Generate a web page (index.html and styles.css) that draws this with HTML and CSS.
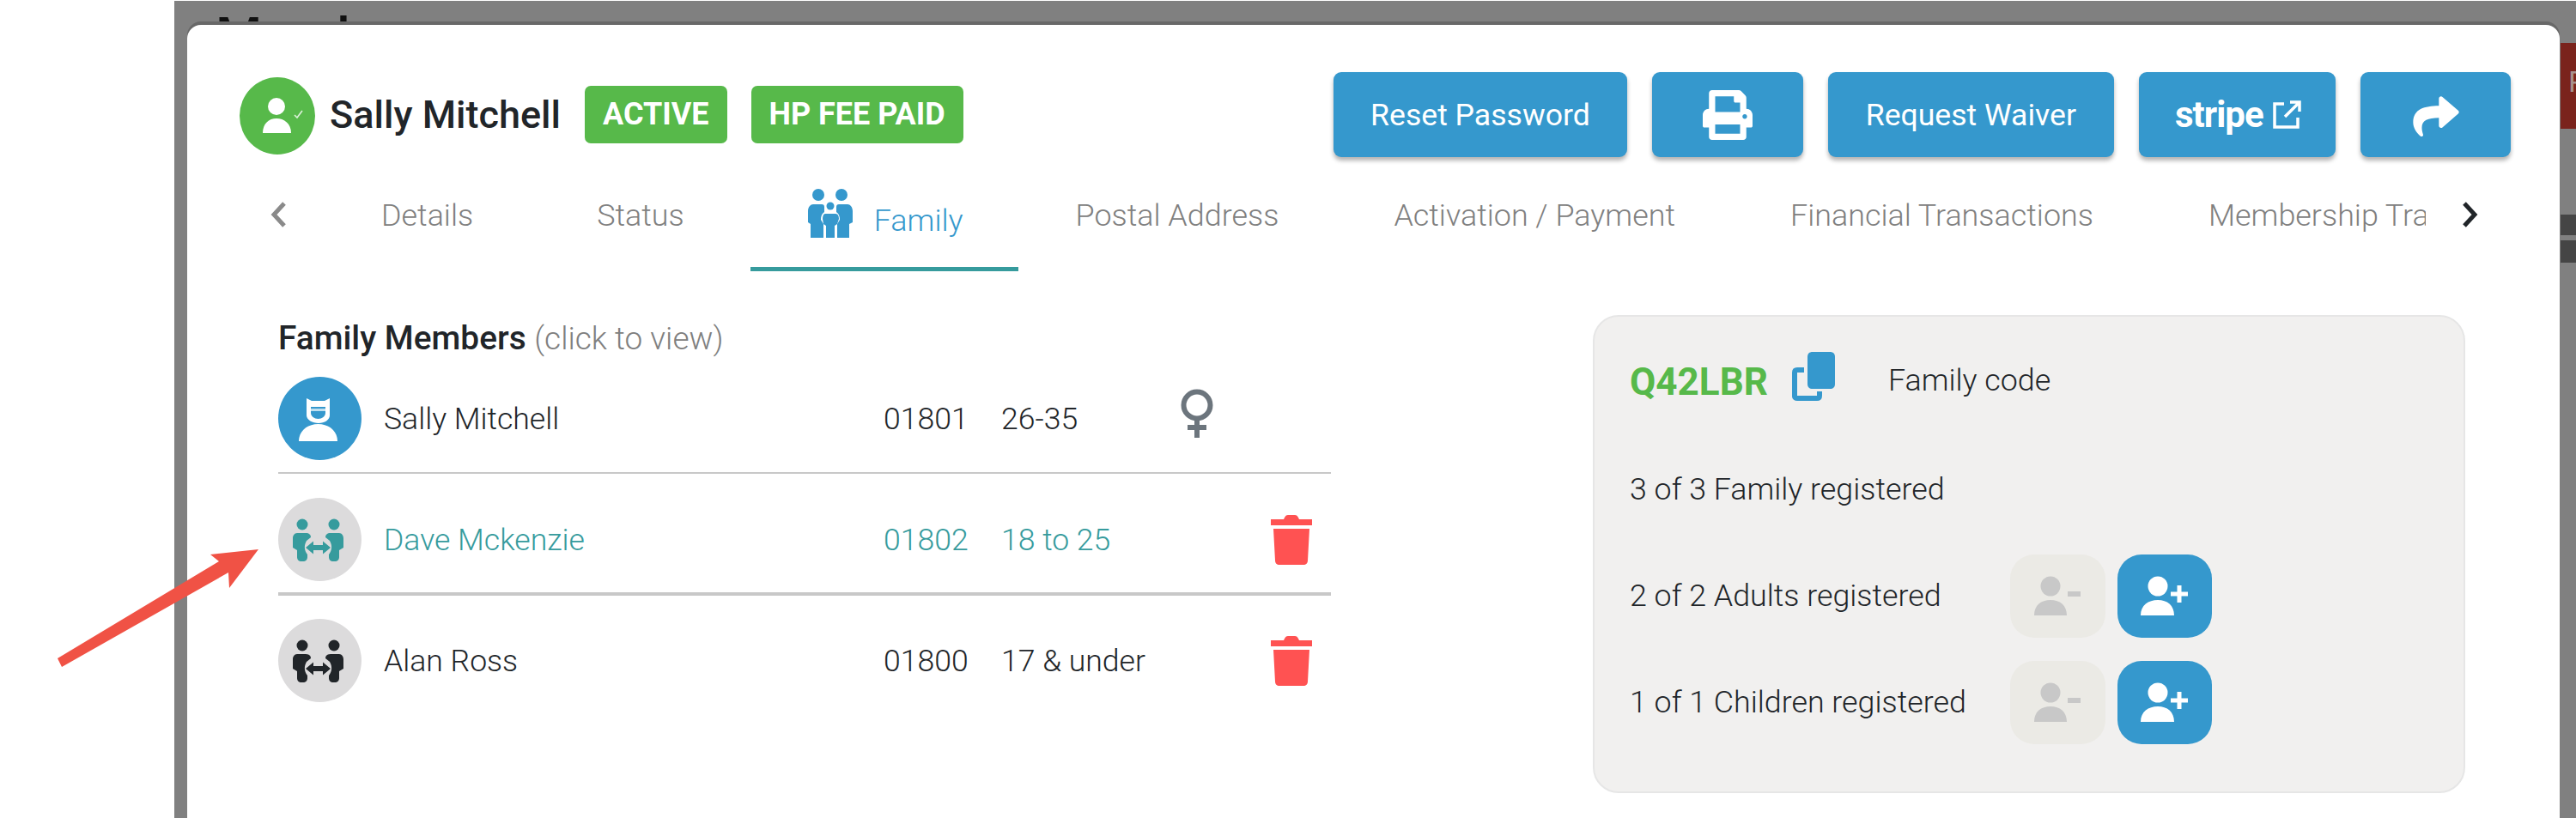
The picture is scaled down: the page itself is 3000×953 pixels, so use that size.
FILE: index.html
```html
<!DOCTYPE html>
<html lang="en">
<head>
    <meta charset="UTF-8">
    <meta name="viewport" content="width=device-width, initial-scale=1.0">
    <title>Members - Sally Mitchell</title>
    <link rel="stylesheet" href="styles.css">
</head>
<body>
    <svg class="defs" width="0" height="0" aria-hidden="true">
        <symbol id="couple" viewBox="0 0 97 97">
            <circle cx="28" cy="31" r="6.5"/>
            <circle cx="65" cy="31" r="6.5"/>
            <path id="half" d="M22 41h10c4 0 6 2 6 5l-5 4c-3 5-3 11 1 16v3c0 3-2 5-5 5h-2c-3 0-5-2-5-5V61l-5-3V47c0-3 2-6 5-6z"/>
            <use href="#half" transform="matrix(-1 0 0 1 93 0)"/>
            <path d="M32 58l9-7.500V55h11v-4.500l9 7.500-9 7.500V61H41v4.500z"/>
        </symbol>
        <symbol id="trash" viewBox="0 0 48 58">
            <path d="M16 3c1-2 2-3 4-3h8c2 0 3 1 4 3l1 2h15v7H0V5h15zM3 16h42l-2 37c0 3-2 5-5 5H10c-3 0-5-2-5-5z"/>
        </symbol>
    </svg>

    <div class="stage">
        <div class="outside"></div>

        <div class="backdrop">
            <div class="page-title">Members</div>
            <div class="page-flag">R</div>
            <div class="page-band one"></div>
            <div class="page-band two"></div>

            <div class="modal">
                <div class="modal-head">
                    <div class="member-title">
                        <div class="status-avatar">
                            <svg width="88" height="90" viewBox="0 0 88 90" fill="#fff">
                                <ellipse cx="43" cy="34" rx="10" ry="10"/>
                                <path d="M27 65c0-11 7-17 16-17s17 6 17 17z"/>
                                <path d="M64 44l3 3 6-8" fill="none" stroke="#fff" stroke-width="1.6" opacity=".8"/>
                            </svg>
                        </div>
                        <span class="member-name">Sally Mitchell</span>
                        <span class="pill">ACTIVE</span>
                        <span class="pill">HP FEE PAID</span>
                    </div>
                    <div class="actions">
                        <button class="action reset">Reset Password</button>
                        <button class="action icon-only print">
                            <svg width="58" height="58" viewBox="0 0 512 512" fill="#fff"><path d="M448 192V77.25c0-8.49-3.37-16.62-9.37-22.63L393.37 9.37c-6-6-14.14-9.37-22.63-9.37H96C78.33 0 64 14.33 64 32v160c-35.35 0-64 28.65-64 64v112c0 8.84 7.16 16 16 16h48v96c0 17.67 14.33 32 32 32h320c17.67 0 32-14.33 32-32v-96h48c8.84 0 16-7.16 16-16V256c0-35.35-28.65-64-64-64zm-64 256H128v-96h256v96zm0-224H128V64h192v48c0 8.84 7.16 16 16 16h48v96zm48 72c-13.25 0-24-10.75-24-24 0-13.26 10.75-24 24-24s24 10.74 24 24c0 13.25-10.75 24-24 24z"/></svg>
                        </button>
                        <button class="action">Request Waiver</button>
                        <button class="action stripe">
                            <span class="stripe-word">stripe</span>
                            <svg width="33" height="33" viewBox="0 0 33 33" fill="none" stroke="#fff" stroke-width="3.5"><path d="M13 4H2v27h27V20"/><path d="M14 19L30 3M20 2h11v11"/></svg>
                        </button>
                        <button class="action icon-only share">
                            <svg width="56" height="50" viewBox="0 0 512 480" fill="#fff"><path d="M503.691 189.836L327.687 37.851C312.281 24.546 288 35.347 288 56.015v80.053C127.371 137.907 0 170.1 0 322.326c0 61.441 39.581 122.309 83.333 154.132 13.653 9.931 33.111-2.533 28.077-18.631C66.066 312.814 132.917 274.316 288 272.085V360c0 20.7 24.3 31.453 39.687 18.164l176.004-152c11.071-9.562 11.086-26.753 0-36.328z"/></svg>
                        </button>
                    </div>
                </div>

                <div class="tab-row">
                    <svg class="chevron" width="19" height="30" viewBox="0 0 19 30" fill="none" stroke="#8a8a8a" stroke-width="5"><path d="M16 2L4 15l12 13"/></svg>
                    <div class="tabs">
                        <a class="tab wide">Details</a>
                        <a class="tab wide">Status</a>
                        <a class="tab active">
                            <svg width="52" height="58" viewBox="0 0 52 58" fill="#3598cd">
                                <circle cx="12" cy="8" r="7"/>
                                <circle cx="39" cy="8" r="7"/>
                                <circle cx="26" cy="21" r="4.5"/>
                                <path d="M6 19h10c2 0 3 1 3 3v6c-3 2-4 5-4 9l3 5v16H3V42l-3-2V27c0-5 3-8 6-8z"/>
                                <path d="M46 19H36c-2 0-3 1-3 3v6c3 2 4 5 4 9l-3 5v16h14V42l4-2V27c0-5-3-8-6-8z"/>
                                <path d="M20 30h12c3 0 4 3 4 6l-2 6-3 2v14H21V44l-3-2-1-6c0-3 1-6 3-6z"/>
                            </svg>
                            <span>Family</span>
                        </a>
                        <a class="tab">Postal Address</a>
                        <a class="tab">Activation / Payment</a>
                        <a class="tab">Financial Transactions</a>
                        <a class="tab">Membership Transactions</a>
                    </div>
                    <svg class="chevron next" width="19" height="30" viewBox="0 0 19 30" fill="none" stroke="#212529" stroke-width="5"><path d="M3 2l12 13L3 28"/></svg>
                </div>

                <div class="tab-body">
                    <div class="family-list">
                        <h3 class="list-heading">Family Members <small>(click to view)</small></h3>

                        <div class="member-row first">
                            <div class="avatar primary">
                                <svg width="97" height="97" viewBox="0 0 97 97">
                                    <path d="M33 25l6 3h15l6-3v20c0 5-6 9-13 9s-14-4-14-9z" fill="#fff"/>
                                    <path d="M38 35h17v7c0 4-4 7-8.500 7S38 46 38 42z" fill="#3598cd"/>
                                    <path d="M38 37h17v3H38z" fill="#bfe0f0"/>
                                    <path d="M24 75c0-12 10-20 22.500-20S69 63 69 75z" fill="#fff"/>
                                </svg>
                            </div>
                            <span>Sally Mitchell</span>
                            <span>01801</span>
                            <span>26-35</span>
                            <svg class="gender" width="38" height="57" viewBox="0 0 38 57" fill="none" stroke="#6c757d" stroke-width="6"><circle cx="19" cy="19" r="15.500"/><path d="M19 35v22M8 45h22"/></svg>
                        </div>

                        <div class="member-row selected thick">
                            <div class="avatar"><svg width="97" height="97"><use href="#couple"/></svg></div>
                            <span>Dave Mckenzie</span>
                            <span>01802</span>
                            <span>18 to 25</span>
                            <span></span>
                            <svg class="trash" width="48" height="58"><use href="#trash"/></svg>
                        </div>

                        <div class="member-row last">
                            <div class="avatar"><svg width="97" height="97"><use href="#couple"/></svg></div>
                            <span>Alan Ross</span>
                            <span>01800</span>
                            <span>17 &amp; under</span>
                            <span></span>
                            <svg class="trash" width="48" height="58"><use href="#trash"/></svg>
                        </div>
                    </div>

                    <div class="family-card">
                        <div class="code-row">
                            <span class="family-code">Q42LBR</span>
                            <svg class="copy" width="50" height="57" viewBox="0 0 50 57">
                                <path d="M14 21H6c-2 0-3 1-3 3v28c0 1 1 2 3 2h23c2 0 3-1 3-3v-5" fill="none" stroke="#3598cd" stroke-width="6"/>
                                <path d="M24 0h20c4 0 6 2 6 6v31c0 4-2 6-6 6H24c-4 0-6-2-6-6V6c0-4 2-6 6-6z" fill="#3598cd"/>
                            </svg>
                            <span class="code-label">Family code</span>
                        </div>
                        <div class="count-row"><span class="count-label">3 of 3 Family registered</span></div>
                        <div class="count-row">
                            <span class="count-label">2 of 2 Adults registered</span>
                            <button class="count-btn off">
                                <svg width="111" height="97" viewBox="0 0 111 97" fill="#c8c8c8"><circle cx="47" cy="37" r="11.500"/><path d="M28 71c0-12 8-18 19-18s19 6 19 18zM67 43h15v6H67z"/></svg>
                            </button>
                            <button class="count-btn">
                                <svg width="110" height="97" viewBox="0 0 110 97" fill="#fff"><circle cx="47" cy="37" r="11.500"/><path d="M27 71c0-12 9-18 20-18s19 6 19 18zM62 43.500h7.500V36h5v7.500H82v5h-7.500V56h-5v-7.500H62z"/></svg>
                            </button>
                        </div>
                        <div class="count-row">
                            <span class="count-label">1 of 1 Children registered</span>
                            <button class="count-btn off">
                                <svg width="111" height="97" viewBox="0 0 111 97" fill="#c8c8c8"><circle cx="47" cy="37" r="11.500"/><path d="M28 71c0-12 8-18 19-18s19 6 19 18zM67 43h15v6H67z"/></svg>
                            </button>
                            <button class="count-btn">
                                <svg width="110" height="97" viewBox="0 0 110 97" fill="#fff"><circle cx="47" cy="37" r="11.500"/><path d="M27 71c0-12 9-18 20-18s19 6 19 18zM62 43.500h7.500V36h5v7.500H82v5h-7.500V56h-5v-7.500H62z"/></svg>
                            </button>
                        </div>
                    </div>
                </div>
            </div>
        </div>

        <!-- annotation drawn over the screenshot -->
        <svg class="callout" width="320" height="160" viewBox="0 0 320 160" fill="#f05245"><path d="M67 127L255 14 245 6 301 0 267 45 266 27 72 137z"/></svg>
    </div>
</body>
</html>
```

FILE: styles.css
```css
* {
    box-sizing: border-box;
}

html, body {
    margin: 0;
    height: 100%;
}

body {
    font-family: Roboto, "Open Sans", sans-serif;
    color: #212529;
    background: #fff;
    overflow: hidden;
}

.defs {
    position: absolute;
}

.stage {
    position: relative;
    display: flex;
    height: 953px;
    overflow: hidden;
}

.outside {
    width: 203px;
    flex: none;
}

.backdrop {
    position: relative;
    flex: 1;
    margin-top: 1px;
    background: #808080;
    padding: 28px 0 0 15px;
}

.page-title {
    position: absolute;
    left: 48px;
    top: 5px;
    font-size: 62px;
    font-weight: 500;
    line-height: 1.2;
    color: #101010;
}

.page-flag {
    position: absolute;
    right: 0;
    top: 49px;
    width: 18px;
    height: 100px;
    padding-left: 9px;
    background: #7a231c;
    color: #a8918e;
    font-size: 34px;
    line-height: 90px;
    overflow: hidden;
}

.page-band {
    position: absolute;
    right: 0;
    width: 18px;
    background: #454545;
}

.page-band.one { top: 249px; height: 24px; }
.page-band.two { top: 279px; height: 26px; }

.modal {
    position: relative;
    width: 2763px;
    height: 940px;
    background: #fff;
    border-radius: 16px 16px 0 0;
    box-shadow: 0 -4px 0 #686868;
}

.modal-head {
    display: flex;
    justify-content: space-between;
    align-items: center;
    padding: 55px 57px 0 61px;
}

.member-title {
    display: flex;
    align-items: center;
}

.status-avatar {
    display: flex;
    width: 88px;
    height: 90px;
    border-radius: 50%;
    background: #57b94a;
    margin-top: 3px;
}

.member-name {
    margin: 0 28px 0 17px;
    font-size: 45px;
    font-weight: 500;
}

.pill {
    height: 67px;
    margin-right: 28px;
    padding: 0 21px;
    background: #57b94a;
    border-radius: 7px;
    color: #fff;
    font-size: 36px;
    font-weight: 700;
    line-height: 66px;
}

.actions {
    display: flex;
    gap: 29px;
}

.action {
    height: 99px;
    padding: 0 44px;
    border: 0;
    border-radius: 9px;
    background: #3598cd;
    color: #fff;
    font-family: inherit;
    font-size: 35.6px;
    font-weight: 400;
    box-shadow: 0 4px 5px rgba(0, 0, 0, 0.3);
}

.action.reset {
    padding: 0 43px;
}

.icon-only {
    display: flex;
    align-items: center;
    justify-content: center;
    padding: 0;
}

.print { width: 176px; }
.share { width: 175px; }

.stripe {
    display: flex;
    align-items: center;
    gap: 11px;
    width: 229px;
    padding: 0 0 0 42px;
}

.stripe-word {
    font-size: 42px;
    font-weight: 700;
    letter-spacing: -1px;
}

.tab-row {
    display: flex;
    align-items: flex-start;
    height: 108px;
    margin-top: 25px;
    padding-left: 97px;
}

.chevron {
    flex: none;
    margin-top: 27px;
}

.chevron.next {
    margin-left: 42px;
}

.tabs {
    display: flex;
    width: 2448px;
    margin-left: 43px;
    overflow: hidden;
}

.tab {
    flex: none;
    height: 108px;
    padding: 22px 67px 0;
    color: #808080;
    font-size: 35.9px;
    font-weight: 300;
    line-height: 42px;
    white-space: nowrap;
}

.tab.wide {
    margin-right: 10px;
}

.tab.active {
    display: flex;
    align-items: flex-start;
    gap: 25px;
    padding: 11px 64px 0 67px;
    border-bottom: 5px solid #369b9d;
    color: #3598cd;
}

.tab.active span {
    margin-top: 17px;
}

.tab-body {
    display: flex;
    align-items: flex-start;
    padding: 57px 0 0 106px;
}

.family-list {
    width: 1226px;
}

.list-heading {
    margin: 0 0 23px;
    font-size: 38.8px;
    font-weight: 500;
    line-height: 42px;
}

.list-heading small {
    color: #808080;
    font-size: 37px;
    font-weight: 300;
}

.member-row {
    display: grid;
    grid-template-columns: 123px 582px 137px 209px 105px 48px;
    align-items: center;
    padding: 28px 0 14px;
    border-bottom: 2px solid #c8c8c8;
    font-size: 35.6px;
    font-weight: 300;
}

.member-row.first {
    padding-top: 0;
}

.member-row.thick {
    padding-bottom: 13px;
    border-bottom-width: 4px;
}

.member-row.last {
    padding-top: 27px;
    border-bottom: 0;
}

.member-row.selected {
    color: #369b9d;
}

.avatar {
    width: 97px;
    height: 97px;
    border-radius: 50%;
    background: #dcdbdc;
    color: #212529;
    fill: #212529;
}

.avatar svg {
    display: block;
}

.avatar.primary {
    background: #3598cd;
}

.member-row.selected .avatar {
    fill: #369b9d;
}

.gender {
    margin-top: -12px;
}

.trash {
    fill: #ff5252;
}

.family-card {
    display: flex;
    flex-direction: column;
    gap: 28px;
    width: 1016px;
    height: 557px;
    margin: -6px 0 0 305px;
    padding: 41px 0 0 41px;
    background: #f1f0ef;
    border: 2px solid #e6e6e6;
    border-radius: 30px;
    font-size: 35.8px;
    font-weight: 300;
}

.code-row {
    display: flex;
    align-items: center;
    height: 57px;
    margin-bottom: 27px;
}

.family-code {
    width: 189px;
    margin-top: 12px;
    color: #57b94a;
    font-size: 44px;
    font-weight: 700;
}

.code-label {
    margin-top: 9px;
}

.copy {
    margin-right: 62px;
}

.count-row {
    display: flex;
    align-items: center;
    height: 96px;
}

.count-label {
    width: 443px;
}

.count-btn {
    width: 110px;
    height: 97px;
    margin-right: 14px;
    padding: 0;
    border: 0;
    border-radius: 28px;
    background: #3598cd;
}

.count-btn svg {
    display: block;
}

.count-btn.off {
    width: 111px;
    background: #ebeae5;
}

.callout {
    position: absolute;
    left: 0;
    top: 640px;
    overflow: visible;
}
```
